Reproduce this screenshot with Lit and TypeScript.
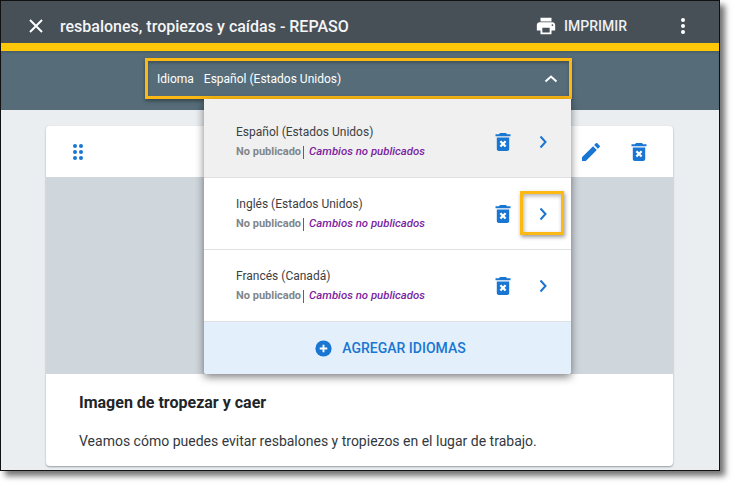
import { LitElement, html, css, svg } from "lit";
import { customElement } from "lit/decorators.js";

const trash = svg`<path d="M15 3H9L8 4.2H4.5V6.2H19.5V4.2H16Z M5.8 7.5H18.2V19C18.2 20.1 17.3 21 16.2 21H7.8C6.7 21 5.8 20.1 5.8 19Z"/><path fill="none" stroke="#fff" stroke-width="2.3" d="M9.4 11.3L14.6 16.5M14.6 11.3L9.4 16.5"/>`;

@customElement("app-root")
export class AppRoot extends LitElement {
  static styles = css`
    :host { display: block; width: 735px; height: 486px; background: #fff; font-family: Roboto, sans-serif; overflow: hidden; }
    .frame { position: relative; box-sizing: border-box; width: 720px; height: 471px; border: 1px solid #111; box-shadow: 5px 5px 6px rgba(0,0,0,.55); display: flex; flex-direction: column; background: #eaeef1; overflow: hidden; }
    .top { flex: none; box-sizing: border-box; height: 42px; background: #474f57; color: #fff; display: flex; align-items: center; padding: 8px 24px 0 24px; }
    .close { width: 22px; height: 22px; fill: none; stroke: #fff; stroke-width: 2; flex: none; }
    .title { font-size: 16px; font-weight: 500; margin-left: 13px; color: #f4f5f6; flex: 1; white-space: nowrap; }
    .print { width: 22px; height: 22px; fill: #fff; flex: none; margin-top: -1px; }
    .printlabel { font-size: 14px; font-weight: 500; margin-left: 7px; color: #eef0f1; margin-top: -1px; }
    .more { width: 24px; height: 24px; fill: #fff; margin-left: 44px; flex: none; }
    .accent { flex: none; height: 8px; background: #ffc709; }
    .lang { flex: none; height: 59px; background: #566d79; box-shadow: inset 0 2px 2px rgba(0,0,0,.12); }
    .body { flex: 1; padding: 16px 46px 4px 45px; display: flex; flex-direction: column; min-height: 0; }
    .card { flex: 1; background: #fff; border-radius: 4px; box-shadow: 0 1px 2px rgba(0,0,0,.35); display: flex; flex-direction: column; overflow: hidden; }
    .tools { flex: none; height: 51px; display: flex; align-items: center; padding: 0 22px 0 20px; gap: 24px; }
    .tools svg { width: 24px; height: 24px; fill: #1976d2; flex: none; }
    .grip { margin-right: auto; }
    .image { flex: none; height: 197px; background: #cfd6dc; }
    .text { padding: 19px 33px 0; }
    .text h2 { margin: 0; font-size: 16px; line-height: 20px; font-weight: 700; color: #212529; }
    .text p { margin: 18px 0 0; font-size: 14px; line-height: 20px; color: #32383d; }

    .selector { position: absolute; left: 144px; top: 57px; box-sizing: border-box; width: 427px; height: 41px; border: 3px solid #fdb913; box-shadow: 0 2px 4px rgba(0,0,0,.4), inset 0 2px 3px rgba(0,0,0,.25); display: flex; align-items: center; padding: 1px 6px 0 9px; color: #fff; font-size: 12px; gap: 10px; }
    .selector .v { flex: 1; }
    .selector svg { width: 24px; height: 24px; fill: none; stroke: #fff; stroke-width: 2; flex: none; }
    .menu { position: absolute; left: 203px; top: 98px; width: 367px; background: #fff; box-shadow: 0 3px 8px rgba(0,0,0,.5); border-radius: 0 0 3px 3px; overflow: hidden; }
    .row { box-sizing: border-box; height: 72px; border-bottom: 1px solid #dfe2e5; display: flex; align-items: center; padding: 0 16px 0 32px; }
    .row.first { height: 79px; background: #f0f0f0; padding-top: 7px; }
    .info { flex: 1; }
    .name { font-size: 12px; line-height: 16px; color: #3c4043; }
    .status { display: flex; align-items: baseline; font-size: 11px; line-height: 14px; margin-top: 4px; white-space: nowrap; }
    .status b { font-weight: 700; color: #80868b; }
    .status .sep { width: 1px; height: 13px; background: #5f6368; margin: 0 5px 0 2px; align-self: center; position: relative; top: 1px; }
    .status i { color: #7b1fa2; font-weight: 500; font-size: 11.4px; }
    .row svg { width: 24px; height: 24px; fill: #1976d2; flex: none; }
    .row .chev { fill: none; stroke: #1976d2; stroke-width: 2; margin-left: 16px; }
    .add { box-sizing: border-box; height: 52px; background: #e3f0fb; display: flex; align-items: center; justify-content: center; gap: 10px; color: #1976d2; font-size: 14px; font-weight: 500; padding: 0 0 1px 6px; }
    .add svg { width: 17px; height: 17px; flex: none; margin-top: 1px; }
    .callout { position: absolute; left: 519px; top: 190px; box-sizing: border-box; width: 44px; height: 44px; border: 3px solid #fdb913; box-shadow: 1px 2px 4px rgba(0,0,0,.4), inset 1px 2px 4px rgba(0,0,0,.3); }
  `;

  private row(name: string, first = false) {
    return html`<div class="row ${first ? "first" : ""}">
      <div class="info">
        <div class="name">${name}</div>
        <div class="status"><b>No publicado</b><span class="sep"></span><i>Cambios no publicados</i></div>
      </div>
      <svg viewBox="0 0 24 24">${trash}</svg>
      <svg class="chev" viewBox="0 0 24 24"><path d="M9.5 6.5L14.5 12L9.5 17.5"/></svg>
    </div>`;
  }

  render() {
    return html`<div class="frame">
      <div class="top">
        <svg class="close" viewBox="0 0 22 22"><path d="M5 5L17 17M17 5L5 17"/></svg>
        <div class="title">resbalones, tropiezos y caídas - REPASO</div>
        <svg class="print" viewBox="0 0 24 24"><path d="M19 8H5C3.3 8 2 9.3 2 11V17H6V21H18V17H22V11C22 9.3 20.7 8 19 8ZM16 19H8V14H16ZM19 12C18.4 12 18 11.6 18 11S18.4 10 19 10 20 10.4 20 11 19.6 12 19 12ZM18 3H6V7H18Z"/></svg>
        <span class="printlabel">IMPRIMIR</span>
        <svg class="more" viewBox="0 0 24 24"><circle cx="12" cy="6" r="2"/><circle cx="12" cy="12" r="2"/><circle cx="12" cy="18" r="2"/></svg>
      </div>
      <div class="accent"></div>
      <div class="lang"></div>
      <div class="body">
        <div class="card">
          <div class="tools">
            <svg class="grip" viewBox="0 0 24 24"><circle cx="9" cy="6" r="2"/><circle cx="15" cy="6" r="2"/><circle cx="9" cy="12" r="2"/><circle cx="15" cy="12" r="2"/><circle cx="9" cy="18" r="2"/><circle cx="15" cy="18" r="2"/></svg>
            <svg viewBox="0 0 24 24"><path d="M3 17.25V21H6.75L17.81 9.94L14.06 6.19ZM20.71 7.04C21.1 6.65 21.1 6.02 20.71 5.63L18.37 3.29C17.98 2.9 17.35 2.9 16.96 3.29L15.13 5.12L18.88 8.87Z"/></svg>
            <svg viewBox="0 0 24 24">${trash}</svg>
          </div>
          <div class="image"></div>
          <div class="text">
            <h2>Imagen de tropezar y caer</h2>
            <p>Veamos cómo puedes evitar resbalones y tropiezos en el lugar de trabajo.</p>
          </div>
        </div>
      </div>
      <div class="selector">
        <span>Idioma</span><span class="v">Español (Estados Unidos)</span>
        <svg viewBox="0 0 24 24"><path d="M6.5 14.5L12 9.5L17.5 14.5"/></svg>
      </div>
      <div class="menu">
        ${this.row("Español (Estados Unidos)", true)}
        ${this.row("Inglés (Estados Unidos)")}
        ${this.row("Francés (Canadá)")}
        <div class="add">
          <svg viewBox="0 0 18 18"><circle cx="9" cy="9" r="8.6" fill="#1976d2"/><path d="M9 5V13M5 9H13" stroke="#fff" stroke-width="2"/></svg>
          AGREGAR IDIOMAS
        </div>
      </div>
      <div class="callout"></div>
    </div>`;
  }
}
